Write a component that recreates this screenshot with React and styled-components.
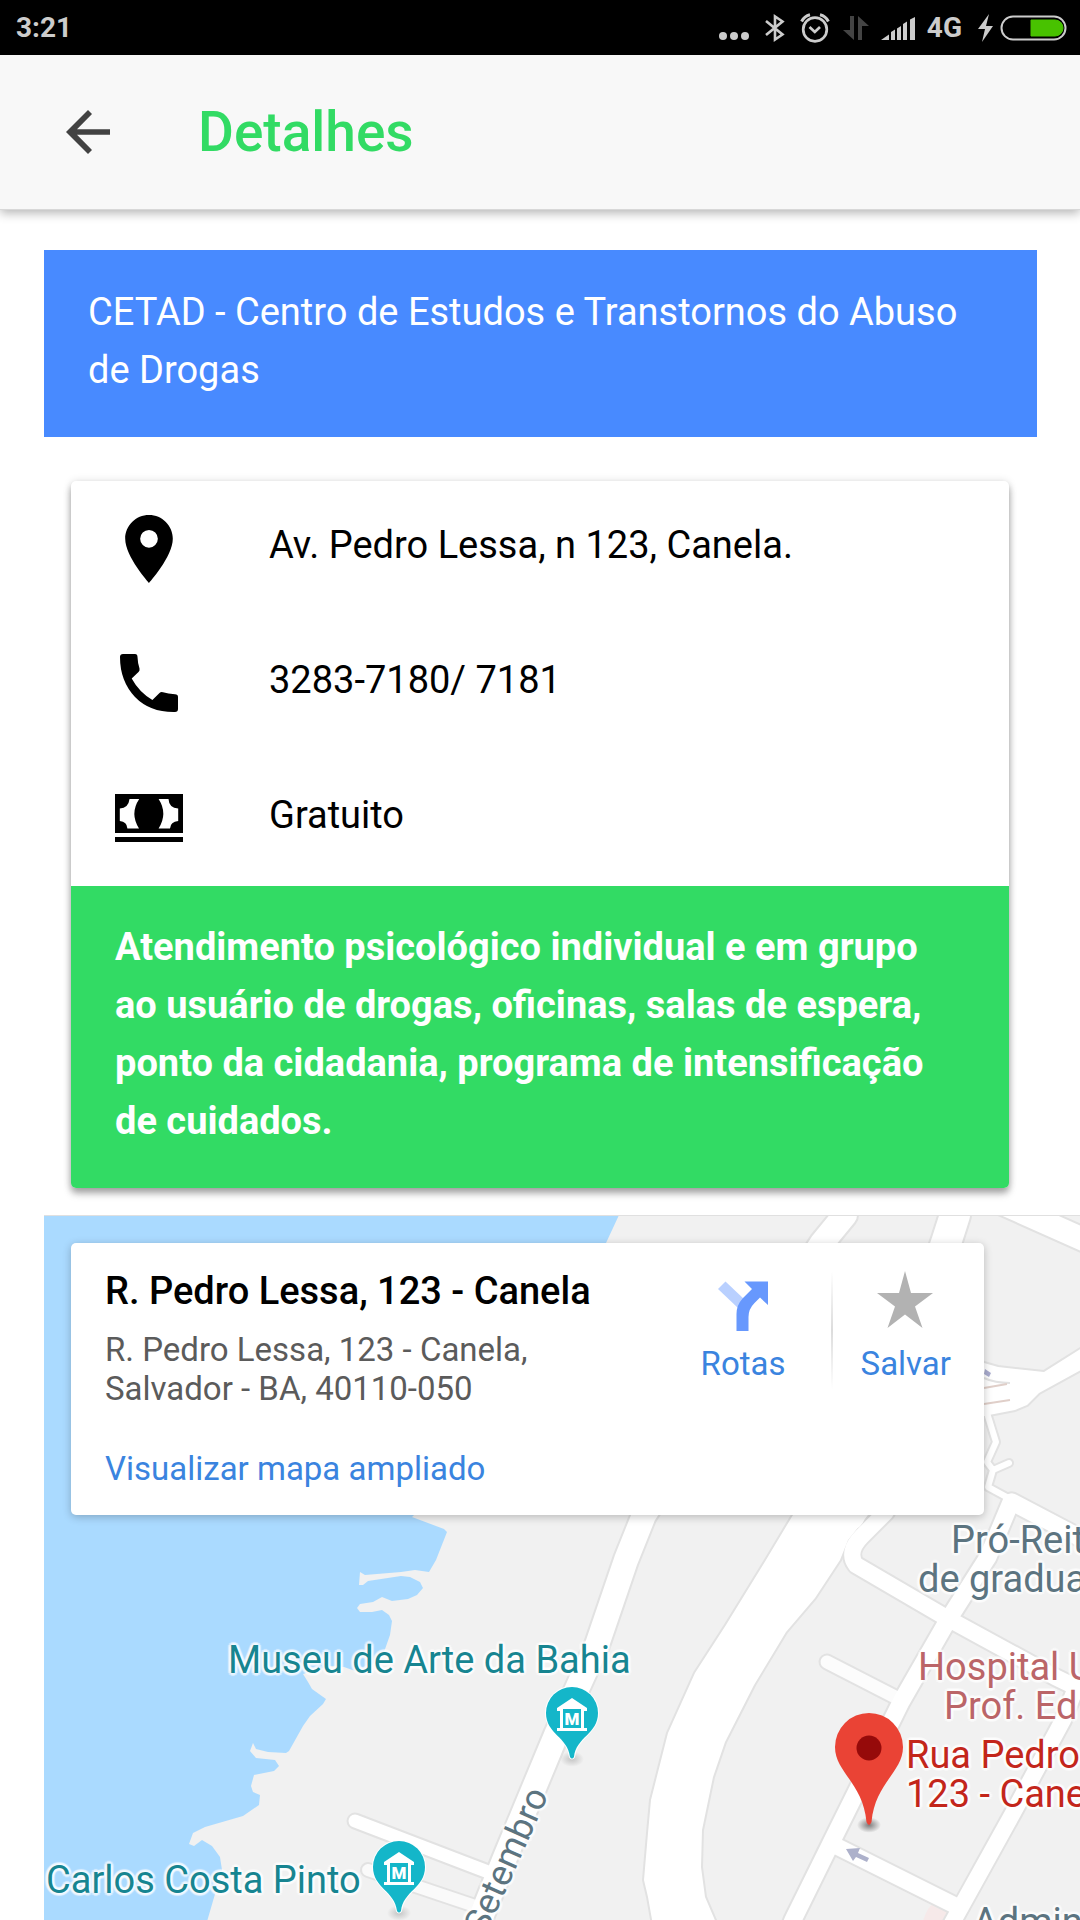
import React from "react";
import styled, { createGlobalStyle } from "styled-components";

const GlobalStyle = createGlobalStyle`
  *, *::before, *::after { box-sizing: border-box; }
  body {
    margin: 0;
    background: #fff;
    color: #000;
    font-family: Roboto, "Noto Sans", sans-serif;
    font-size: 38px;
    line-height: 58px;
  }
  h1, h2, p, address, ul { margin: 0; padding: 0; font-style: normal; }
  button { border: 0; padding: 0; background: none; font: inherit; color: inherit; cursor: pointer; }
  svg { display: block; flex: none; }
`;

const Page = styled.div`
  display: flex;
  flex-direction: column;
  min-height: 100vh;
`;

const StatusBar = styled.div`
  display: flex;
  align-items: center;
  justify-content: space-between;
  height: 55px;
  padding: 0 13px 0 16px;
  background: #000;
  color: #ccc;
  font-size: 28px;
  line-height: 32px;
  font-weight: 700;
`;

const StatusIcons = styled.div`
  display: flex;
  align-items: center;
  gap: 12px;
`;

const Header = styled.header`
  position: relative;
  display: flex;
  align-items: center;
  gap: 88px;
  height: 154px;
  padding: 0 66px;
  background: #f8f8f8;
  box-shadow: 0 1px 0 #d8d8d8, 0 4px 10px rgba(0, 0, 0, 0.3);
`;

const Title = styled.h1`
  color: #32db64;
  font-size: 55px;
  line-height: 64px;
  font-weight: 500;
`;

const Main = styled.main`
  display: flex;
  flex: 1;
  flex-direction: column;
  padding: 41px 0 0 44px;
`;

const Banner = styled.h2`
  margin-right: 43px;
  padding: 33px 44px 38px;
  background: #488aff;
  color: #fff;
  font-size: 38px;
  font-weight: 400;
`;

const Card = styled.section`
  margin: 44px 71px 27px 27px;
  overflow: hidden;
  border-radius: 5px;
  background: #fff;
  box-shadow: 0 5px 6px rgba(0, 0, 0, 0.24), 0 0 8px rgba(0, 0, 0, 0.12), 0 6px 10px rgba(0, 0, 0, 0.12);
`;

const Rows = styled.ul`
  list-style: none;
`;

const Row = styled.li`
  display: flex;
  align-items: center;
  gap: 86px;
  min-height: 135px;
  padding: 0 44px;
`;

const RowText = styled.span`
  padding-bottom: 8px;
`;

const Description = styled.p`
  padding: 32px 44px 38px;
  background: #32db64;
  color: #fff;
  font-weight: 700;
`;

const MapArea = styled.section`
  position: relative;
  flex: 1;
  min-height: 705px;
  overflow: hidden;
  background: #f1f1f1;
`;

const MapDrawing = styled.svg`
  position: absolute;
  top: 0;
  left: 0;
  width: 100%;
  height: 100%;
`;

const MapLabel = styled.div`
  position: absolute;
  left: ${(p) => p.$x}px;
  top: ${(p) => p.$y}px;
  color: ${(p) => p.$color};
  font-size: 38px;
  line-height: 39px;
  white-space: nowrap;
  text-shadow: 0 0 3px rgba(255, 255, 255, 0.8), 3px 0 1px rgba(255, 255, 255, 0.5),
    -3px 0 1px rgba(255, 255, 255, 0.5), 0 3px 1px rgba(255, 255, 255, 0.5),
    0 -3px 1px rgba(255, 255, 255, 0.5), 2px 2px 1px rgba(255, 255, 255, 0.5),
    -2px -2px 1px rgba(255, 255, 255, 0.5), 2px -2px 1px rgba(255, 255, 255, 0.5),
    -2px 2px 1px rgba(255, 255, 255, 0.5);
`;

const StreetLabel = styled(MapLabel)`
  font-size: 36px;
  transform: rotate(-66deg);
`;

const Pin = styled.svg`
  position: absolute;
  left: ${(p) => p.$x}px;
  top: ${(p) => p.$y}px;
`;

const InfoCard = styled.div`
  position: absolute;
  top: 28px;
  left: 27px;
  display: flex;
  align-items: flex-start;
  width: calc(100% - 123px);
  padding: 24px 33px 27px 34px;
  border-radius: 5px;
  background: #fff;
  box-shadow: 0 2px 8px rgba(0, 0, 0, 0.24);
  font-size: 33px;
  line-height: 39px;
`;

const Place = styled.div`
  flex: 1;
`;

const PlaceName = styled.h2`
  margin-bottom: 15px;
  font-size: 38px;
  line-height: 48px;
  font-weight: 500;
`;

const PlaceAddress = styled.address`
  margin-bottom: 41px;
  color: #5b5b5b;
`;

const MapLink = styled.a`
  color: #3a84df;
  text-decoration: none;
`;

const Actions = styled.div`
  display: flex;
  padding-top: 4px;
`;

const Action = styled.button`
  display: flex;
  flex-direction: column;
  align-items: center;
  gap: 13px;
  color: #3a84df;
`;

const Divider = styled.div`
  width: 2px;
  height: 118px;
  margin: 0 28px 0 45px;
  background: linear-gradient(#fff, #dcdcdc 50%, #fff);
`;

const DotsIcon = () => (
  <svg width="34" height="28" viewBox="0 0 34 28" fill="#ccc" aria-hidden="true">
    <circle cx="5" cy="22" r="4" />
    <circle cx="16" cy="22" r="4" />
    <circle cx="27" cy="22" r="4" />
  </svg>
);

const BluetoothIcon = () => (
  <svg width="22" height="28" viewBox="0 0 22 28" fill="none" stroke="#ccc" strokeWidth="2.6" aria-hidden="true">
    <path d="M2 7 18.500 20.500 11 25.500V2.500L18.500 7.500 2 21" />
  </svg>
);

const AlarmIcon = () => (
  <svg width="33" height="30" viewBox="0 0 33 30" fill="none" stroke="#ccc" strokeWidth="2.7" aria-hidden="true">
    <circle cx="17" cy="16.5" r="11.8" />
    <path d="M11.5 14 16.8 19 22 14" />
    <path d="M3.6 8.500C5.400 5 8 2.800 12 1.800M30.400 8.500C28.600 5 26 2.800 22 1.800" strokeWidth="3" />
  </svg>
);

const DataIcon = () => (
  <svg width="26" height="26" viewBox="0 0 26 26" fill="#444" aria-hidden="true">
    <path d="M7 1h4v24L0 15h7zM15 25h4V11h7L15 1z" />
  </svg>
);

const SignalIcon = () => (
  <svg width="34" height="26" viewBox="1 0 34 26" fill="#ccc" aria-hidden="true">
    <path d="M1 25 9 19.500V25zM11 17l4-2.500V25h-4zM17 13.500l4-2.500v14h-4zM23 9l4-2.500V25h-4zM30 4.500 35 2v23h-5z" />
  </svg>
);

const BatteryIcon = () => (
  <svg width="93" height="28" viewBox="1 0 93 28" aria-hidden="true">
    <path d="M16 0 5 15h7L9 28 20 12h-7z" fill="#ccc" />
    <rect x="28.500" y="2.500" width="64" height="23" rx="11.500" fill="none" stroke="#ccc" strokeWidth="2" />
    <path d="M58 6h24a8 8 0 0 1 0 16H58z" fill="#48c200" stroke="#48c200" />
  </svg>
);

const BackIcon = () => (
  <svg width="44" height="44" viewBox="0 0 44 44" fill="#424242" aria-hidden="true">
    <path d="M44 19.200H11L26 4 22 0 0 22l22 22 4-4L11 24.800h33z" />
  </svg>
);

const PlaceIcon = () => (
  <svg width="68" height="68" viewBox="2 2 20 20" aria-hidden="true">
    <path d="M12 2C8.130 2 5 5.130 5 9c0 5.250 7 13 7 13s7-7.750 7-13c0-3.870-3.130-7-7-7zm0 9.600a2.600 2.600 0 1 1 0-5.200 2.600 2.600 0 0 1 0 5.200z" />
  </svg>
);

const PhoneIcon = () => (
  <svg width="68" height="68" viewBox="-5 -4 68 68" aria-hidden="true">
    <path d="M3 0H15Q17.500 0 17.500 3 17.700 9 19.500 14.500 20 16.500 18.500 18L11.700 24.500Q19 38 32.400 46L39.500 39Q41 37.500 43 38.300 48 40 55 40.300 58 40.500 58 43V55Q58 58 55 58 30 58.500 15 43 0 27 0 3 0 0 3 0z" />
  </svg>
);

const CashIcon = () => (
  <svg width="68" height="50" viewBox="0 0 68 50" fillRule="evenodd" aria-hidden="true">
    <path d="M0 0H68V39H0zM14.500 5H24.200Q14.600 19.500 24 34.500H12.400Q12 27.500 4.800 27V14.500Q13.500 14 14.500 5zM43.600 5Q53 19.500 43.600 34.500H55Q55.500 27.500 63.200 27V14.500Q54 14 53.500 5z" />
    <path d="M0 43h68v5H0z" />
  </svg>
);

const RouteIcon = () => (
  <svg width="50" height="60" viewBox="0 0 50 60" aria-hidden="true">
    <path d="M0 18 7.500 10.500 27 29 20 37z" fill="#b9d0ff" />
    <path d="M26.500 10.500H50V34L42 26.500 36.500 32Q30.500 38 30.500 46V60H18.500V43Q18.500 34 25 27L34 18z" fill="#6798fd" />
  </svg>
);

const StarIcon = () => (
  <svg width="58" height="60" viewBox="0 0 58 60" fill="#b2b2b2" aria-hidden="true">
    <path d="M28 0 34 22H56L38 35.500 45.500 57 28 43.500 10.500 57 18 35.500 0 22H22z" />
  </svg>
);

const PinShadow = ({ id, cx, cy, r, color }) => (
  <>
    <radialGradient id={id}>
      <stop offset="0" stopColor={color} />
      <stop offset="1" stopColor={color} stopOpacity="0" />
    </radialGradient>
    <ellipse cx={cx} cy={cy} rx={r} ry={r * 0.65} fill={`url(#${id})`} />
  </>
);

const Museum = ({ id, x, y }) => (
  <Pin $x={x} $y={y} width="60" height="86" viewBox="0 0 60 86" aria-hidden="true">
    <PinShadow id={id} cx={30} cy={75} r={12} color="#c4c4c4" />
    <path
      d="M30 3A26 26 0 0 0 4 29C4 50 26 53 28 73Q30 76 32 73C34 53 56 50 56 29A26 26 0 0 0 30 3z"
      fill="#14b6c9"
      stroke="#fff"
      strokeWidth="2"
      paintOrder="stroke"
    />
    <path d="M30 14 15 24v3h3v17h-3v3h30v-3h-3V27h3v-3zM21 25h18v19H21z" fill="#fff" fillRule="evenodd" />
    <text x="30" y="41" fill="#fff" fontFamily="Roboto, sans-serif" fontWeight="900" fontSize="17" textAnchor="middle">
      M
    </text>
  </Pin>
);

/* Streets as centre lines: each is stroked once for its border and once for its surface. */
const streets = [
  { w: 12, c: "#fafafa", d: "M368 1870 478 1907" },
  { w: 13, d: "M355 1821 496 1875" },
  { w: 24, d: "M845 1215 822 1243 644 1515 626 1560 597 1645 556 1735 504 1860 480 1920 470 1945" },
  { w: 30, d: "M955 1215 946 1243 850 1515" },
  { w: 13, c: "#fcfcfc", d: "M827 1662 901 1700" },
  { w: 16, d: "M886 1512 862 1536Q846 1552 856 1565L945 1617 1055 1677 1090 1694" },
  { w: 17, d: "M1011 1502 988 1557 948 1620 901 1702 831 1843 793 1920 783 1945" },
  { w: 17, d: "M1012 1502 1090 1543" },
  { w: 16, d: "M1075 1690 1063 1720 1013 1813 962 1905 940 1945" },
  { w: 16, d: "M836 1846 960 1908" },
  { w: 6, d: "M1012 1500 988 1487 993 1470 987 1462 996 1442 987 1413M993 1470 1009 1463" },
];

const areas = [
  "M793 1515 766 1560 726 1625 695 1673 668 1733 651 1800 648 1833 644 1880 648 1897 653 1925H717L705 1897 701 1867 702 1830 713 1777 725 1742 754 1685 786 1632 815 1598 840 1560 848 1540 868 1515z",
  "M975 1358 984 1363 998 1367 1044 1372 1090 1343V1365L1039 1393 1027 1405 1015 1410 989 1415 975 1418z",
  "M996 1213 1090 1255V1230L1052 1213z",
];

const water =
  "M44 1215H619L606 1243 500 1430 412 1517 444 1529 447 1532 436 1560 429 1572 415 1570 401 1572 365 1575 360 1572 359 1585 363 1585 368 1581 401 1576 410 1577 420 1582 423 1588 417 1595 408 1599 392 1601 382 1597 373 1602 360 1604 357 1608 360 1612 372 1612 382 1610 389 1615 392 1621 390 1635 384 1652 372 1665 358 1672 344 1667 330 1666 303 1674 308 1682 312 1689 326 1699 323 1704 310 1716 303 1726 289 1751 286 1753 268 1752 256 1749 253 1743 250 1751 256 1758 275 1760 279 1766 274 1771 254 1775 251 1786 253 1792 260 1795 259 1805 243 1816 205 1827 193 1833 189 1844 194 1846 202 1840 212 1846 220 1857 222 1870 206 1925H44z";

const StreetMap = () => (
  <MapDrawing viewBox="44 1215 1036 705" preserveAspectRatio="xMinYMin slice" aria-hidden="true">
    <path d={water} fill="#aadaff" />
    <path d="M922 1925Q926 1908 934 1903L952 1912V1925z" fill="#f6e9e9" />
    <g fill="none" stroke="#e2e2e2" strokeLinecap="round" strokeLinejoin="round">
      {streets.map((s) => (
        <path key={s.d} d={s.d} strokeWidth={s.w + 4} />
      ))}
      {areas.map((d) => (
        <path key={d} d={d} strokeWidth="4" />
      ))}
    </g>
    <g fill="none" strokeLinecap="round" strokeLinejoin="round">
      {streets.map((s) => (
        <path key={s.d} d={s.d} strokeWidth={s.w} stroke={s.c || "#fff"} />
      ))}
    </g>
    {areas.map((d) => (
      <path key={d} d={d} fill="#fff" />
    ))}
    <path d="M984 1378Q995 1383 1010 1383" stroke="#e2e2e2" strokeWidth="2" fill="none" />
    <path d="M984 1388 1007 1384M984 1404 1010 1400" stroke="#e0cfc9" strokeWidth="2" />
    <path d="M985 1369 991 1373 989 1377 984 1374z" fill="#a9acce" />
    <path d="M846 1849 860 1848 858 1853 869 1858 867 1862 856 1857 853 1861z" fill="#adb1cb" />
    <path d="M44 1215.500H1080" stroke="#e0e0e0" />
  </MapDrawing>
);

const teal = "#178591";
const slate = "#5c7480";
const rose = "#bb6568";
const red = "#c3261b";

export default function App() {
  return (
    <>
      <GlobalStyle />
      <Page>
        <StatusBar>
          <span>3:21</span>
          <StatusIcons>
            <DotsIcon />
            <BluetoothIcon />
            <AlarmIcon />
            <DataIcon />
            <SignalIcon />
            <span>4G</span>
            <BatteryIcon />
          </StatusIcons>
        </StatusBar>

        <Header>
          <button type="button" aria-label="Voltar">
            <BackIcon />
          </button>
          <Title>Detalhes</Title>
        </Header>

        <Main>
          <Banner>CETAD - Centro de Estudos e Transtornos do Abuso de Drogas</Banner>

          <Card>
            <Rows>
              <Row>
                <PlaceIcon />
                <RowText>Av. Pedro Lessa, n 123, Canela.</RowText>
              </Row>
              <Row>
                <PhoneIcon />
                <RowText>3283-7180/ 7181</RowText>
              </Row>
              <Row>
                <CashIcon />
                <RowText>Gratuito</RowText>
              </Row>
            </Rows>
            <Description>
              Atendimento psicológico individual e em grupo ao usuário de drogas, oficinas, salas de espera, ponto da
              cidadania, programa de intensificação de cuidados.
            </Description>
          </Card>

          <MapArea>
            <StreetMap />
            <MapLabel $x={184} $y={426} $color={teal}>Museu de Arte da Bahia</MapLabel>
            <MapLabel $x={2} $y={646} $color={teal}>Carlos Costa Pinto</MapLabel>
            <StreetLabel $x={385} $y={626} $color={slate}>Setembro</StreetLabel>
            <MapLabel $x={907} $y={306} $color={slate}>Pró-Reit</MapLabel>
            <MapLabel $x={874} $y={345} $color={slate}>de gradua</MapLabel>
            <MapLabel $x={874} $y={433} $color={rose}>Hospital U</MapLabel>
            <MapLabel $x={900} $y={472} $color={rose}>Prof. Ed</MapLabel>
            <MapLabel $x={929} $y={688} $color={slate}>Admin</MapLabel>
            <Museum id="museum-bahia" x={498} y={469} />
            <Museum id="museum-costa" x={325} y={623} />
            <Pin $x={785} $y={494} width="80" height="130" viewBox="0 0 80 130" aria-hidden="true">
              <PinShadow id="place-shadow" cx={40} cy={116} r={12} color="#7c7c7c" />
              <path
                d="M40 4A34 34 0 0 0 6 38C6 63 34 74 37.500 113Q40 119 42.500 113C46 74 74 63 74 38A34 34 0 0 0 40 4z"
                fill="#ea4335"
              />
              <circle cx="40" cy="39" r="12.500" fill="#960a0a" />
            </Pin>
            <MapLabel $x={862} $y={521} $color={red}>
              Rua Pedro
              <br />
              123 - Cane
            </MapLabel>

            <InfoCard>
              <Place>
                <PlaceName>R. Pedro Lessa, 123 - Canela</PlaceName>
                <PlaceAddress>
                  R. Pedro Lessa, 123 - Canela,
                  <br />
                  Salvador - BA, 40110-050
                </PlaceAddress>
                <MapLink href="#mapa">Visualizar mapa ampliado</MapLink>
              </Place>
              <Actions>
                <Action type="button">
                  <RouteIcon />
                  Rotas
                </Action>
                <Divider />
                <Action type="button">
                  <StarIcon />
                  Salvar
                </Action>
              </Actions>
            </InfoCard>
          </MapArea>
        </Main>
      </Page>
    </>
  );
}
